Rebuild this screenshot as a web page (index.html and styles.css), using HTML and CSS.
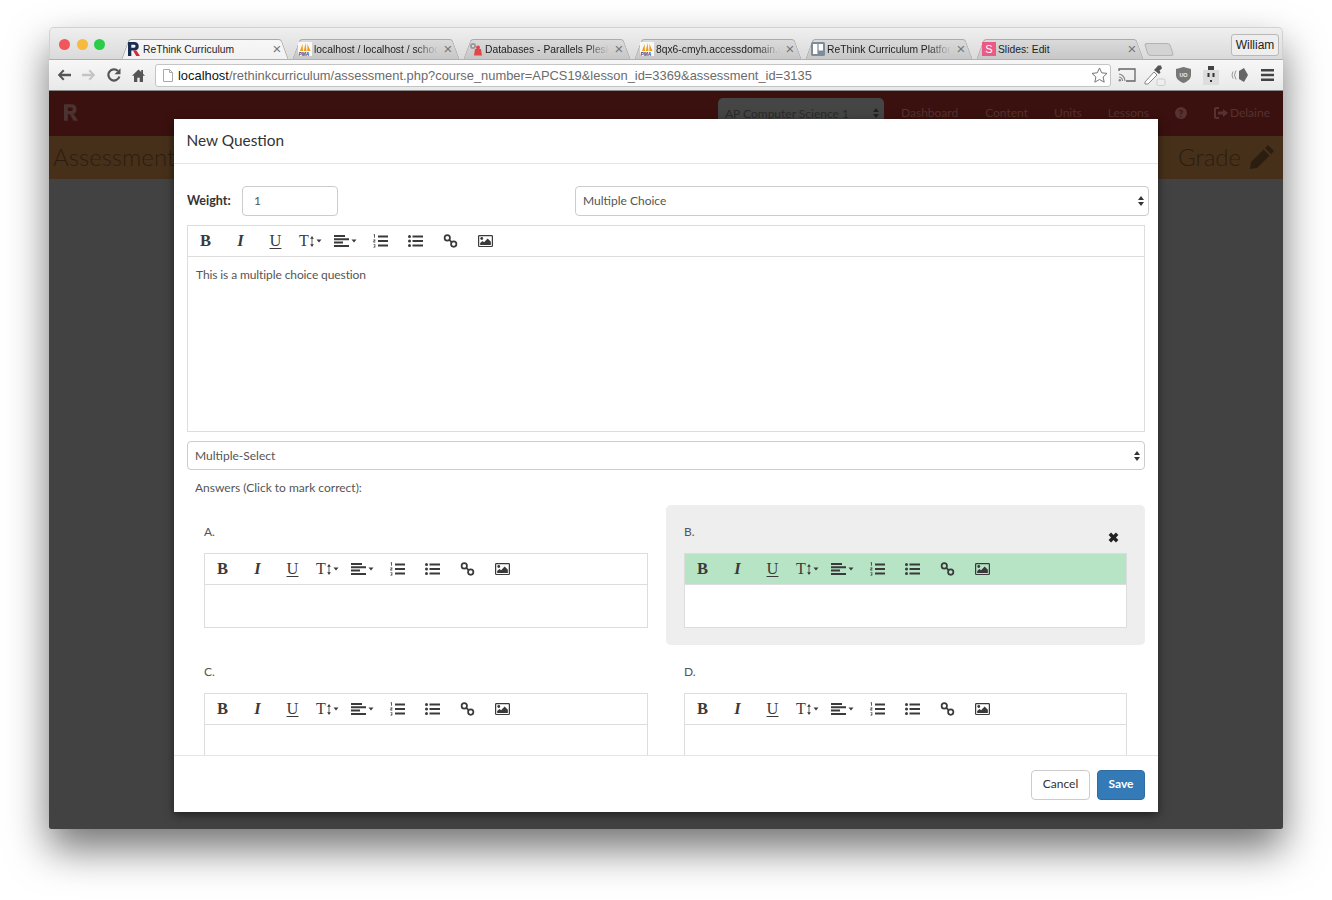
FILE: index.html
```html
<!DOCTYPE html>
<html lang="en">
<head>
<meta charset="utf-8">
<title>ReThink Curriculum</title>
<link rel="stylesheet" href="styles.css">
</head>
<body>
<svg class="sprite" width="0" height="0" aria-hidden="true">
  <symbol id="i-caret" viewBox="0 0 6 4"><path d="M0.500 .5h5L3 3.500z"/></symbol>
  <symbol id="i-updown" viewBox="0 0 5 14"><path d="M2.500 0 4.800 3.500H3v7h1.800L2.500 14 .2 10.500H2v-7H.2z"/></symbol>
  <symbol id="i-align" viewBox="0 0 15 12"><path d="M0 0h11v2H0zM0 3.300h15v2H0zM0 6.600h9v2H0zM0 9.900h15v2H0z"/></symbol>
  <symbol id="i-ol" viewBox="0 0 15 14"><path d="M5 1.400h10v2H5zM5 6h10v2H5zM5 10.600h10v2H5z"/><path d="M.8.300h1.100v3.400h-.8V1.200H.6zM.4 5.600h1.900v1.700H1.200v.5h1.100v.6H.4V6.800h1.100v-.6H.4zM.4 10.200h1.900v3.400H.4V13h1.100v-.5H.8v-.5h.7v-1.200H.4z"/></symbol>
  <symbol id="i-ul" viewBox="0 0 15 12"><circle cx="1.500" cy="1.500" r="1.500"/><circle cx="1.500" cy="6" r="1.500"/><circle cx="1.500" cy="10.500" r="1.500"/><path d="M4.500.5H15v2H4.500zM4.500 5H15v2H4.500zM4.500 9.500H15v2H4.500z"/></symbol>
  <symbol id="i-link" viewBox="0 0 14 13"><g fill="none" stroke="currentColor" stroke-width="1.600"><circle cx="4" cy="3.600" r="2.500"/><circle cx="10" cy="9.400" r="2.500"/><path d="M5.800 5.400l2.400 2.200"/></g></symbol>
  <symbol id="i-image" viewBox="0 0 16 13"><path fill-rule="evenodd" d="M1.500 0h13A1.500 1.500 0 0 1 16 1.500v10a1.500 1.500 0 0 1-1.500 1.500h-13A1.500 1.500 0 0 1 0 11.500v-10A1.500 1.500 0 0 1 1.500 0zM1.300 1.300v10.400h13.400V1.300z"/><circle cx="4" cy="3.800" r="1.500"/><path d="M2.300 10.700V8.500l2.500-2 1.700 1.300 3.800-4 3.400 3.500v3.400z"/></symbol>
  <symbol id="i-logo" viewBox="0 0 12 14"><path d="M0 0h6.500a4.300 4.300 0 0 1 1.500 8.300V8.500H3.300V14H0zM3.300 2.800v2.900h2.800a1.450 1.450 0 0 0 0-2.900z" fill="currentColor"/><path d="M5 8.500h3.400L12 14H8.200z" fill="var(--leg)"/></symbol>
  <symbol id="i-pma" viewBox="0 0 14 14"><rect width="14" height="14" fill="#f7f7f7"/><path d="M2 9 4.500 2 5 9zM5.800 9 7.500 1 8.500 9zM9.300 9 9.500 2 12.500 9z" fill="#f29a12"/><text x="0.500" y="13.600" font-size="4.800" font-family="Liberation Sans" font-style="italic" font-weight="700" fill="#33408c">PMA</text></symbol>
</svg>

<div class="window">
  <div class="tabstrip">
    <div class="lights"><i class="light red"></i><i class="light yellow"></i><i class="light green"></i></div>
    <div class="tabs">
      <div class="tab active">
        <svg class="favicon logo-fav"><use href="#i-logo"/></svg>
        <span class="tab-title">ReThink Curriculum</span><span class="tab-x">×</span>
      </div>
      <div class="tab">
        <svg class="favicon"><use href="#i-pma"/></svg>
        <span class="tab-title fade">localhost / localhost / school</span><span class="tab-x">×</span>
      </div>
      <div class="tab">
        <svg class="favicon" viewBox="0 0 14 14"><circle cx="4" cy="4" r="3" fill="#999"/><circle cx="4" cy="4" r="1.100" fill="#eee"/><path d="M6 7h6l1 6.500H5z" fill="#e0484c"/><circle cx="9" cy="5.500" r="2" fill="#e0484c"/></svg>
        <span class="tab-title fade">Databases - Parallels Plesk 1</span><span class="tab-x">×</span>
      </div>
      <div class="tab">
        <svg class="favicon"><use href="#i-pma"/></svg>
        <span class="tab-title fade">8qx6-cmyh.accessdomain.com</span><span class="tab-x">×</span>
      </div>
      <div class="tab">
        <svg class="favicon" viewBox="0 0 14 14"><rect width="14" height="14" rx="1.500" fill="#7d8c98"/><rect x="2" y="2" width="4.400" height="10" fill="#fff"/><rect x="7.600" y="2" width="4.400" height="6.500" fill="#fff"/></svg>
        <span class="tab-title fade">ReThink Curriculum Platform</span><span class="tab-x">×</span>
      </div>
      <div class="tab">
        <span class="favicon slides-fav">S</span>
        <span class="tab-title">Slides: Edit</span><span class="tab-x">×</span>
      </div>
      <div class="new-tab"></div>
    </div>
    <div class="profile">William</div>
  </div>

  <div class="chrome-bar">
    <div class="nav-btn"><svg width="14" height="12" viewBox="0 0 14 12"><path d="M6 .5 .8 6 6 11.500l1.500-1.500L4.600 7.200H14V4.800H4.600L7.500 2z" fill="#555"/></svg></div>
    <div class="nav-btn"><svg width="14" height="12" viewBox="0 0 14 12"><path d="M8 .5 13.200 6 8 11.500 6.500 10l2.900-2.800H0V4.800h9.400L6.500 2z" fill="#c4c4c4"/></svg></div>
    <div class="nav-btn"><svg width="14" height="14" viewBox="0 0 14 14"><path d="M12.400 8.500A5.600 5.600 0 1 1 11 3" fill="none" stroke="#555" stroke-width="2.200"/><path d="M13.500 .3v6h-6z" fill="#555"/></svg></div>
    <div class="nav-btn"><svg width="13" height="13" viewBox="0 0 13 13"><path d="M6.500 .5 0 6.800h2V13h3.300V8.800h2.400V13H11V6.800h2L11 4.800V1H9.200v2z" fill="#555"/></svg></div>
    <div class="omnibox">
      <svg class="page-icon" width="10" height="13" viewBox="0 0 10 13"><path d="M.5.500h6l3 3v9h-9zM6.500.500v3h3" fill="#fff" stroke="#aaa"/></svg>
      <span class="url"><b class="host">localhost</b>/rethinkcurriculum/assessment.php?course_number=APCS19&amp;lesson_id=3369&amp;assessment_id=3135</span>
      <svg class="star" width="17" height="16" viewBox="0 0 17 16"><path d="M8.500 1l2.200 4.800 5.300.6-3.900 3.600 1.100 5.200-4.700-2.700-4.700 2.700L4.900 10 1 6.400l5.300-.6z" fill="#fff" stroke="#777"/></svg>
    </div>
    <div class="ext"><svg width="18" height="14" viewBox="0 0 18 14"><path d="M1 3V1h16v12H8" fill="none" stroke="#666" stroke-width="1.300"/><path d="M1 6a7 7 0 0 1 6 7M1 9a4 4 0 0 1 3.500 4" fill="none" stroke="#888" stroke-width="1.200"/><circle cx="1.800" cy="12.300" r="1.200" fill="#888"/></svg></div>
    <div class="ext"><svg width="22" height="22" viewBox="0 0 22 22"><path d="M1 18 10 8l3 3-9 9-3 0z" fill="#fff" stroke="#888"/><path d="M10 6l2-2 2-2.500 3 0 1 3-2.500 2 1 2-1.500 1.500z" fill="#555"/><rect x="13" y="15" width="8" height="6.500" rx="1.500" fill="#eee" stroke="#ccc"/></svg></div>
    <div class="ext"><svg width="15" height="16" viewBox="0 0 15 16"><path d="M7.500 0 15 2v6c0 4-3.500 6.500-7.500 8C3.500 14.500 0 12 0 8V2z" fill="#777"/><text x="7.500" y="9.500" font-size="5.500" text-anchor="middle" font-weight="700" font-family="Liberation Sans" fill="#eee">UO</text></svg></div>
    <div class="ext"><svg width="16" height="19" viewBox="0 0 16 19"><rect y="4" width="16" height="15" fill="#ddd"/><path d="M5 0h6v4H5z" fill="#444"/><rect x="4.500" y="7" width="2" height="4" fill="#333"/><rect x="9.500" y="7" width="2" height="4" fill="#333"/><rect x="7" y="14" width="2" height="2" fill="#333"/></svg></div>
    <div class="ext"><svg width="18" height="14" viewBox="0 0 18 14"><path d="M9 3 14 0l4 7-4 7-5-3z" fill="#666"/><path d="M6 2.500Q3 7 6 11.500M3 3.500Q1 7 3 10.500" fill="none" stroke="#999"/></svg></div>
    <div class="ext"><svg width="13" height="12" viewBox="0 0 13 12"><path d="M0 0h13v2.400H0zM0 4.800h13v2.400H0zM0 9.600h13V12H0z" fill="#444"/></svg></div>
  </div>

  <div class="page">
    <header class="site-nav">
      <svg class="site-logo"><use href="#i-logo"/></svg>
      <div class="course-select"><span>AP Computer Science 1</span><span class="arrows dark"><i></i><i></i></span></div>
      <a class="site-link first">Dashboard</a>
      <a class="site-link wide">Content</a>
      <a class="site-link">Units</a>
      <a class="site-link wide-s">Lessons</a>
      <span class="help">?</span>
      <a class="site-link user"><svg width="14" height="12" viewBox="0 0 14 12"><path d="M5 1H2a1 1 0 0 0-1 1v8a1 1 0 0 0 1 1h3" fill="none" stroke="currentColor" stroke-width="2"/><path d="M9 2l5 4-5 4V7.500H4v-3h5z" fill="currentColor"/></svg>Delaine</a>
    </header>
    <div class="subnav">
      <span class="subnav-title">Assessment</span>
      <span class="subnav-grade">Grade
        <svg width="24" height="24" viewBox="0 0 24 24"><path d="M18 0l6 6-3 3-6-6zM13.500 4.500l6 6L7 23 0 24l1-7z" fill="currentColor"/></svg>
      </span>
    </div>

    <div class="modal">
      <div class="modal-header"><h4 class="modal-title">New Question</h4></div>
      <div class="modal-body">
        <div class="question-row">
          <label class="weight-label">Weight:</label>
          <div class="input">1</div>
          <div class="select type-select"><span>Multiple Choice</span><span class="arrows"><i></i><i></i></span></div>
        </div>

        <div class="editor">
          <div class="toolbar">
            <span class="tb b">B</span><span class="tb i">I</span><span class="tb u">U</span>
            <span class="tb t">T<svg class="ud"><use href="#i-updown"/></svg><svg class="caret"><use href="#i-caret"/></svg></span>
            <span class="tb"><svg class="ic-align"><use href="#i-align"/></svg><svg class="caret"><use href="#i-caret"/></svg></span>
            <span class="tb"><svg class="ic"><use href="#i-ol"/></svg></span>
            <span class="tb"><svg class="ic"><use href="#i-ul"/></svg></span>
            <span class="tb"><svg class="ic"><use href="#i-link"/></svg></span>
            <span class="tb"><svg class="ic"><use href="#i-image"/></svg></span>
          </div>
          <div class="editor-body main">This is a multiple choice question</div>
        </div>

        <div class="select mode-select"><span>Multiple-Select</span><span class="arrows"><i></i><i></i></span></div>
        <p class="answers-label">Answers (Click to mark correct):</p>

        <div class="answers">
          <div class="answer">
            <div class="answer-label">A.</div>
            <div class="editor">
              <div class="toolbar">
                <span class="tb b">B</span><span class="tb i">I</span><span class="tb u">U</span>
                <span class="tb t">T<svg class="ud"><use href="#i-updown"/></svg><svg class="caret"><use href="#i-caret"/></svg></span>
                <span class="tb"><svg class="ic-align"><use href="#i-align"/></svg><svg class="caret"><use href="#i-caret"/></svg></span>
                <span class="tb"><svg class="ic"><use href="#i-ol"/></svg></span>
                <span class="tb"><svg class="ic"><use href="#i-ul"/></svg></span>
                <span class="tb"><svg class="ic"><use href="#i-link"/></svg></span>
                <span class="tb"><svg class="ic"><use href="#i-image"/></svg></span>
              </div>
              <div class="editor-body"></div>
            </div>
          </div>
          <div class="answer selected">
            <div class="answer-label">B.</div>
            <svg class="remove" width="11" height="11" viewBox="1 1 9 9"><path d="M1.500 3.500l2-2 2 2 2-2 2 2-2 2 2 2-2 2-2-2-2 2-2-2 2-2z" fill="#222"/></svg>
            <div class="editor">
              <div class="toolbar">
                <span class="tb b">B</span><span class="tb i">I</span><span class="tb u">U</span>
                <span class="tb t">T<svg class="ud"><use href="#i-updown"/></svg><svg class="caret"><use href="#i-caret"/></svg></span>
                <span class="tb"><svg class="ic-align"><use href="#i-align"/></svg><svg class="caret"><use href="#i-caret"/></svg></span>
                <span class="tb"><svg class="ic"><use href="#i-ol"/></svg></span>
                <span class="tb"><svg class="ic"><use href="#i-ul"/></svg></span>
                <span class="tb"><svg class="ic"><use href="#i-link"/></svg></span>
                <span class="tb"><svg class="ic"><use href="#i-image"/></svg></span>
              </div>
              <div class="editor-body"></div>
            </div>
          </div>
          <div class="answer">
            <div class="answer-label">C.</div>
            <div class="editor">
              <div class="toolbar">
                <span class="tb b">B</span><span class="tb i">I</span><span class="tb u">U</span>
                <span class="tb t">T<svg class="ud"><use href="#i-updown"/></svg><svg class="caret"><use href="#i-caret"/></svg></span>
                <span class="tb"><svg class="ic-align"><use href="#i-align"/></svg><svg class="caret"><use href="#i-caret"/></svg></span>
                <span class="tb"><svg class="ic"><use href="#i-ol"/></svg></span>
                <span class="tb"><svg class="ic"><use href="#i-ul"/></svg></span>
                <span class="tb"><svg class="ic"><use href="#i-link"/></svg></span>
                <span class="tb"><svg class="ic"><use href="#i-image"/></svg></span>
              </div>
              <div class="editor-body"></div>
            </div>
          </div>
          <div class="answer">
            <div class="answer-label">D.</div>
            <div class="editor">
              <div class="toolbar">
                <span class="tb b">B</span><span class="tb i">I</span><span class="tb u">U</span>
                <span class="tb t">T<svg class="ud"><use href="#i-updown"/></svg><svg class="caret"><use href="#i-caret"/></svg></span>
                <span class="tb"><svg class="ic-align"><use href="#i-align"/></svg><svg class="caret"><use href="#i-caret"/></svg></span>
                <span class="tb"><svg class="ic"><use href="#i-ol"/></svg></span>
                <span class="tb"><svg class="ic"><use href="#i-ul"/></svg></span>
                <span class="tb"><svg class="ic"><use href="#i-link"/></svg></span>
                <span class="tb"><svg class="ic"><use href="#i-image"/></svg></span>
              </div>
              <div class="editor-body"></div>
            </div>
          </div>
        </div>
      </div>
      <div class="modal-footer">
        <button class="btn btn-default">Cancel</button>
        <button class="btn btn-primary">Save</button>
      </div>
    </div>
  </div>
</div>
</body>
</html>
```

FILE: styles.css
```css
* { box-sizing: border-box; }
html, body { margin: 0; height: 900px; overflow: hidden; background: #fff; }
body { padding: 27px 49px 0; font-family: "Lato", sans-serif; color: #333; }
.sprite { position: absolute; }

/* Browser window */
.window {
  width: 1234px; height: 802px; display: flex; flex-direction: column;
  border-radius: 5px 5px 2px 2px;
  box-shadow: 0 20px 40px rgba(0,0,0,.55);
}
.tabstrip {
  height: 32px; display: flex; position: relative;
  background: linear-gradient(#efefef, #dadada);
  border-radius: 5px 5px 0 0;
  border: 1px solid #d2d2d2; border-bottom: 0;
  font-family: "Liberation Sans", sans-serif;
}
.lights { display: flex; gap: 6.500px; padding: 11px 0 0 10px; width: 72px; margin-left: -1px; }
.light { width: 11px; height: 11px; border-radius: 50%; }
.light.red { background: #f2555a; }
.light.yellow { background: #f7b93e; }
.light.green { background: #2ccb48; }
.tabs { display: flex; gap: 3px; padding-top: 11px; height: 32px; }
.tab {
  position: relative; width: 168px; height: 21px; display: flex; align-items: center;
  padding: 0 6px 1px 6px; font-size: 10.300px; color: #222;
}
.tab::before, .tab::after {
  content: ""; position: absolute; top: 0; bottom: 0; width: 50%;
  background: linear-gradient(#dadada, #c6c6c6);
  border-top: 1px solid #ababab;
}
.tab::before { left: 0; transform: skewX(-20deg); transform-origin: bottom left; border-left: 1px solid #ababab; border-radius: 3px 0 0 0; }
.tab::after { right: 0; transform: skewX(20deg); transform-origin: bottom right; border-right: 1px solid #ababab; border-radius: 0 3px 0 0; }
.tab.active::before, .tab.active::after { background: linear-gradient(#f7f7f7, #f1f1f1); }
.tab > * { position: relative; z-index: 1; }
.favicon { width: 14px; height: 14px; flex: none; margin-right: 2px; }
.logo-fav { color: #1a2d52; --leg: #d12b35; }
.slides-fav { background: #ea5a85; color: #fff; font-size: 11px; line-height: 14px; text-align: center; }
.tab-title { flex: 1; white-space: nowrap; overflow: hidden; min-width: 0; }
.tab-title.fade { -webkit-mask-image: linear-gradient(90deg, #000 82%, transparent 100%); mask-image: linear-gradient(90deg, #000 82%, transparent 100%); }
.tab-x { width: 12px; font-size: 15px; line-height: 12px; text-align: center; color: #777; margin-left: 4px; }
.new-tab {
  width: 26px; height: 13px; margin: 4px 0 0 0; background: #d3d3d3;
  border: 1px solid #b4b4b4; border-radius: 3px;
  transform: skewX(18deg);
  margin-left: -1px; align-self: flex-start;
}
.profile {
  position: absolute; left: 1181px; top: 6px; width: 48px; height: 22px;
  border: 1px solid #b9b9b9; border-radius: 3px; background: #eee;
  font-size: 12px; line-height: 20px; text-align: center; color: #222;
}

.chrome-bar {
  height: 32px; display: flex; align-items: center; padding: 0 2px 0 2.500px;
  background: linear-gradient(#f7f7f7, #e9e9e9);
  border-top: 1px solid #b0b0b0; border-bottom: 1px solid #8a8a8a;
  position: relative;
}
.nav-btn { width: 25px; display: flex; justify-content: center; flex: none; }
.nav-btn:nth-child(n+3) { width: 24.500px; }
.omnibox {
  flex: 1; height: 23px; margin: 0 2px 0 4.500px; display: flex; align-items: center;
  background: #fff; border: 1px solid #c4c4c4; border-radius: 3px;
  padding: 0 2px 0 7px; min-width: 0;
  font-family: "Liberation Sans", sans-serif; font-size: 12.900px;
}
.page-icon { flex: none; margin-right: 5px; }
.url { flex: 1; color: #6b6b6b; white-space: nowrap; overflow: hidden; }
.host { color: #111; font-weight: 400; }
.star { flex: none; }
.ext { width: 28px; display: flex; justify-content: center; align-items: center; flex: none; }

/* Dimmed page */
.page { position: relative; flex: 1; background: #424242; border-radius: 0 0 2px 2px; }
.site-nav {
  height: 45px; background: #3a110f; display: flex; align-items: center;
  font-size: 12px; color: #573230; padding: 0 13px 2px 0;
}
.site-logo { width: 14px; height: 17px; margin-left: 15px; color: #4a3330; --leg: #4a3330; flex: none; }
.course-select {
  margin-left: auto; width: 166px; height: 30px; background: #454545;
  border-radius: 5px 5px 0 0; display: flex; align-items: center; justify-content: space-between;
  padding: 0 5px 0 7px; color: #2a2a2a; align-self: flex-start; margin-top: 7px;
}
.site-link { margin-left: 26px; white-space: nowrap; }
.site-link.first { margin-left: 17px; }
.site-link.wide { margin-left: 27px; }
.help {
  width: 12px; height: 12px; margin-left: 26px; border-radius: 50%; background: #573230;
  color: #3a110f; font-size: 10px; line-height: 12px; text-align: center; font-weight: 700;
}
.site-link.user { margin-left: 27px; display: flex; align-items: center; gap: 2px; }
.subnav {
  height: 43px; background: #46301a; display: flex; justify-content: space-between; align-items: center;
  padding: 0 9px 2px 4px; font-size: 24px; font-weight: 300; color: #2b1e10;
}
.subnav-grade { display: flex; align-items: center; gap: 9px; }

/* Modal */
.modal {
  position: absolute; left: 125px; top: 28px; width: 984px; height: 693px;
  background: #fff; display: flex; flex-direction: column;
  box-shadow: 0 3px 9px rgba(0,0,0,.5);
}
.modal-header { height: 45px; border-bottom: 1px solid #e5e5e5; padding: 0 12.500px 3px; display: flex; align-items: center; flex: none; }
.modal-title { margin: 0; font-size: 15.400px; font-weight: 400; color: #333; }
.modal-body { flex: 1; min-height: 0; overflow: hidden; padding: 22px 13px 0; font-size: 12px; color: #555; }
.modal-footer {
  height: 57px; flex: none; border-top: 1px solid #e5e5e5;
  display: flex; justify-content: flex-end; align-items: center; gap: 7px; padding: 1px 13px 0;
}
.btn { height: 30px; border-radius: 4px; font: 400 12px "Lato", sans-serif; padding: 0 0 2px; }
.btn-default { width: 59px; background: #fff; border: 1px solid #ccc; color: #333; }
.btn-primary { width: 48px; background: #337ab7; border: 1px solid #2e6da4; color: #fff; font-weight: 700; }

.question-row { display: flex; align-items: center; height: 29px; margin-bottom: 10px; }
.weight-label { width: 55px; font-weight: 700; font-size: 12.500px; color: #333; }
.input { width: 96px; height: 30px; border: 1px solid #ccc; border-radius: 4px; padding: 0 11px; line-height: 28px; color: #555; }
.select {
  height: 30px; border: 1px solid #ccc; border-radius: 4px; background: #fff; display: flex;
  align-items: center; justify-content: space-between; padding: 0 4px 0 7px; color: #555;
}
.type-select { width: 574px; margin-left: auto; margin-right: -4px; }
.arrows { display: flex; flex-direction: column; gap: 2px; }
.arrows i { display: block; width: 0; height: 0; border-left: 3px solid transparent; border-right: 3px solid transparent; }
.arrows i:first-child { border-bottom: 4px solid #333; }
.arrows i:last-child { border-top: 4px solid #333; }
.arrows.dark i:first-child { border-bottom-color: #222; }
.arrows.dark i:last-child { border-top-color: #222; }

.editor { border: 1px solid #ddd; background: #fff; }
.toolbar { height: 31px; display: flex; align-items: center; border-bottom: 1px solid #ddd; color: #3a3a3a; }
.tb { width: 35px; display: flex; justify-content: center; align-items: center; flex: none; font: 16.500px "Liberation Serif", serif; fill: #3a3a3a; }
.tb.b { font-weight: 700; }
.tb.i { font-style: italic; font-weight: 700; }
.tb.u { text-decoration: underline; text-underline-offset: 2px; }
.tb.t { font-size: 16px; }
.ud { width: 4px; height: 13px; margin-left: 1px; }
.caret { width: 6px; height: 4px; margin-left: 2px; }
.ic { width: 15px; height: 14px; }
.ic-align { width: 15px; height: 12px; }
.editor-body { height: 42px; padding: 10px 8px; }
.editor-body.main { height: 174px; letter-spacing: -.1px; }
.mode-select { margin-top: 9px; height: 29px; }
.answers-label { margin: 0; padding: 10px 8px 0; height: 35px; color: #555; }

.answers { display: grid; grid-template-columns: 1fr 1fr; grid-auto-rows: 140px; }
.answer { position: relative; padding: 0 18px 17px 18px; border-radius: 5px; }
.answer:nth-child(odd) { padding-left: 17px; }
.answer-label { height: 48px; padding-top: 19px; line-height: 16px; color: #555; }
.answer.selected { background: #eee; }
.answer.selected .toolbar { background: #b6e4c5; }
.remove { position: absolute; right: 26px; top: 27px; }
```
